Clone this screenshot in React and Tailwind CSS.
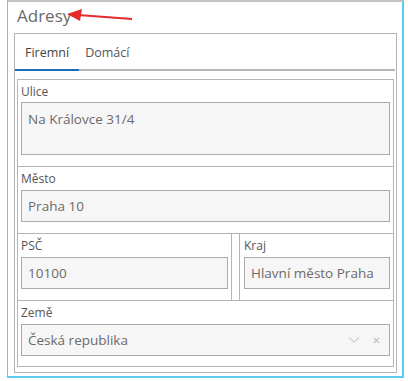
import React from "react";

const font = { fontFamily: '"Open Sans", "Noto Sans", sans-serif' };

const Field = ({ label, value, tall, className = "", labelGap = "mb-[3px]", children }) => (
  <div className={"pt-[4px] pb-[11px] " + className}>
    <div className={"text-[12px] leading-[16px] text-[#555] " + labelGap}>{label}</div>
    <div
      className={
        "border border-[#ababab] bg-[#f6f6f6] text-[13.5px] text-[#6b6b6b] px-[6px] flex " +
        (tall ? "h-[53px] items-start pt-[6px]" : "h-[32px] items-center")
      }
    >
      <span className="flex-1 truncate">{value}</span>
      {children}
    </div>
  </div>
);

export default function App() {
  return (
    <div className="w-[408px] h-[381px] bg-white" style={font}>
      <div className="ml-[7px] w-[397px] h-[378px] border-l border-r-2 border-b-2 border-[#5ccbf3] border-t-2 border-t-[#c4c4c4] relative">
        {/* nadpis */}
        <div className="h-[31px] pl-[9px] pt-[1px] text-[17px] leading-[26px] text-[#6a6a6a]">Adresy</div>
        <svg className="absolute left-[58px] top-[4px]" width="76" height="18" viewBox="0 0 76 18">
          <line x1="12" y1="9" x2="66" y2="13" stroke="#e52b2b" strokeWidth="2" />
          <polygon points="1,8 16,3 14,15" fill="#e52b2b" />
        </svg>

        {/* taby */}
        <div className="ml-[6px] w-[383px] h-[340px] border border-[#b5b5b5] flex flex-col">
          <div className="h-[37px] flex items-end border-b-2 border-[#b5b5b5] mr-[1px]">
            <div className="relative h-full px-[10px] pt-[3px] flex items-center text-[12.5px] text-[#444]">
              Firemní
              <div className="absolute left-0 right-0 -bottom-[2px] h-[2px] bg-[#1e6cb6]" />
            </div>
            <div className="h-full px-[6px] pt-[3px] flex items-center text-[12.5px] text-[#555]">Domácí</div>
          </div>

          <div className="mt-[8px] ml-[2px] mr-[2px] border border-[#b5b5b5]">
            <Field label="Ulice" value="Na Královce 31/4" tall labelGap="mb-[2px]" className="px-[3px] border-b border-[#b5b5b5]" />
            <Field label="Město" value="Praha 10" className="px-[3px] border-b border-[#b5b5b5]" />
            <div className="flex border-b border-[#b5b5b5]">
              <Field label="PSČ" value="10100" className="w-[214px] pl-[3px] pr-[3px] border-r border-[#b5b5b5]" />
              <div className="w-[7px]" />
              <Field label="Kraj" value="Hlavní město Praha" className="flex-1 pl-[4px] pr-[3px] border-l border-[#b5b5b5]" />
            </div>
            <Field label="Země" value="Česká republika" className="px-[3px] !pb-[10px]">
              <svg width="12" height="8" viewBox="0 0 12 8" className="mr-[13px]">
                <polyline points="1,1.5 6,6 11,1.5" fill="none" stroke="#cfcfcf" strokeWidth="1.2" />
              </svg>
              <svg width="7" height="7" viewBox="0 0 7 7" className="mr-[3px]">
                <path d="M1 1 L6 6 M6 1 L1 6" stroke="#c4c4c4" strokeWidth="1.2" />
              </svg>
            </Field>
          </div>
        </div>
      </div>
    </div>
  );
}
